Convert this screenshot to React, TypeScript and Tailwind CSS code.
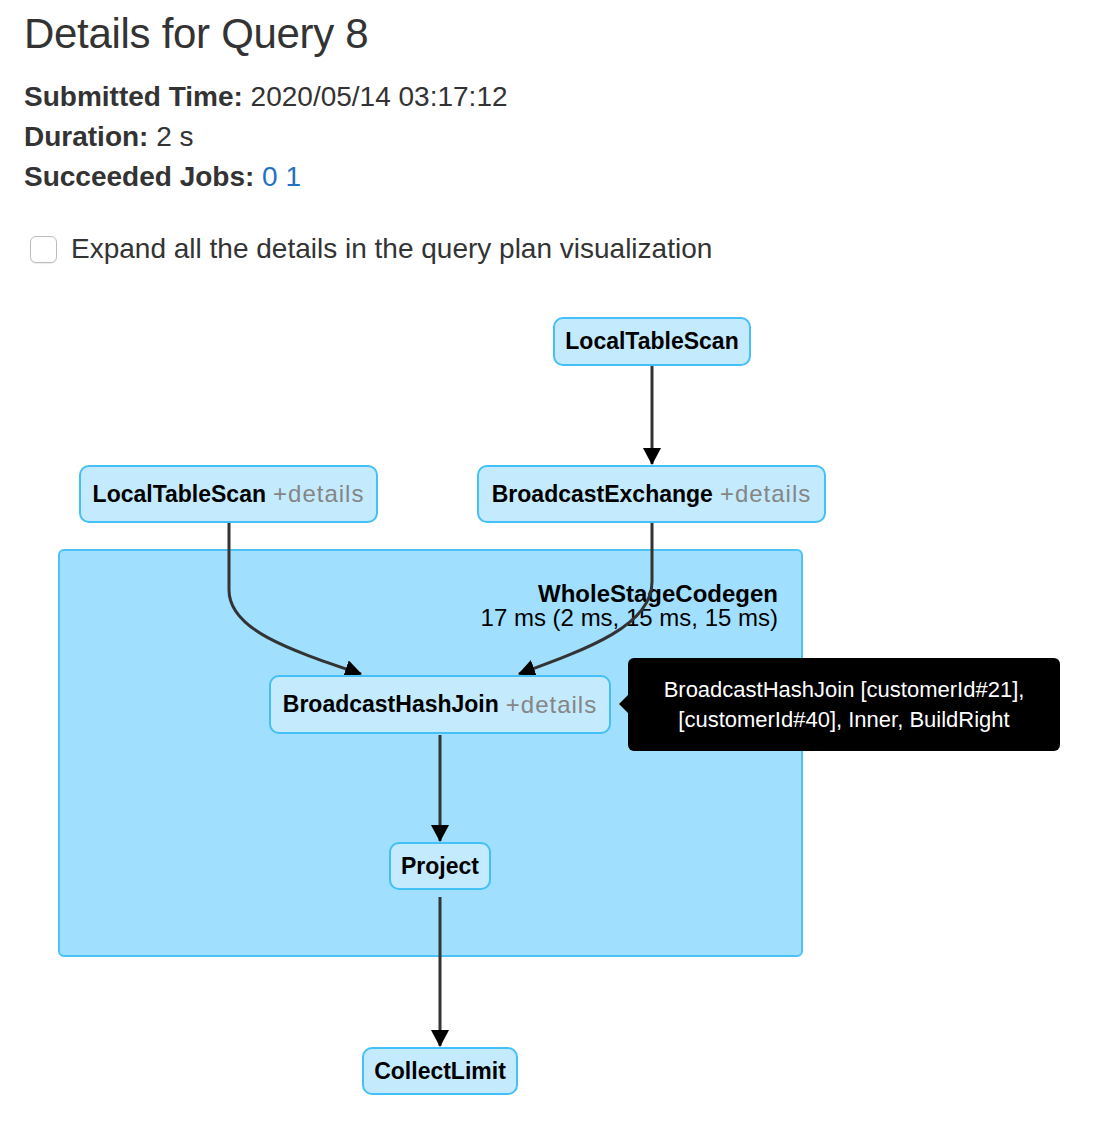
const font = { fontFamily: '"Liberation Sans", Arial, Helvetica, sans-serif' };

type NodeProps = {
  name: string;
  details?: boolean;
  className: string;
};

function PlanNode({ name, details, className }: NodeProps) {
  return (
    <div
      className={`absolute flex items-center justify-center rounded-[10px] border-2 border-[#42c0f7] bg-[#c4eafe] text-[23px] leading-none whitespace-nowrap ${className}`}
    >
      <span className="font-bold text-black">{name}</span>
      {details && <span className="ml-[7px] text-[24px] tracking-[1px] text-[#858585]">+details</span>}
    </div>
  );
}

function Edges() {
  return (
    <svg className="absolute left-0 top-0" width="1104" height="826">
      <defs>
        <marker
          id="arrow"
          markerUnits="userSpaceOnUse"
          markerWidth="18"
          markerHeight="18"
          refX="16"
          refY="9"
          orient="auto"
        >
          <path d="M0 0 L17 9 L0 18 z" fill="#000" />
        </marker>
      </defs>
      <g stroke="#333" strokeWidth="3" fill="none">
        <path d="M652 65 V164" markerEnd="url(#arrow)" />
        <path d="M229 222 V290 C229 330 290 350 361 374" markerEnd="url(#arrow)" />
        <path d="M652 222 V282 C652 325 590 348 519 374" markerEnd="url(#arrow)" />
        <path d="M440 435 V541" markerEnd="url(#arrow)" />
        <path d="M440 597 V746" markerEnd="url(#arrow)" />
      </g>
    </svg>
  );
}

export default function App() {
  return (
    <div className="min-h-[1126px] w-[1104px] bg-white text-[#333]" style={font}>
      <div className="px-[24px] pt-[10px]">
        <h1 className="text-[42px] leading-[48px] font-light tracking-[-0.3px]">Details for Query 8</h1>
        <ul className="mt-[19px] text-[28px] leading-[40px]">
          <li>
            <strong>Submitted Time:</strong> 2020/05/14 03:17:12
          </li>
          <li>
            <strong>Duration:</strong> 2 s
          </li>
          <li>
            <strong>Succeeded Jobs:</strong>{" "}
            <a href="#" className="text-[#1f74c0]">0</a>{" "}
            <a href="#" className="text-[#1f74c0]">1</a>
          </li>
        </ul>
        <label className="mt-[32px] flex items-center text-[28px] leading-[40px]">
          <span className="ml-[6px] mr-[14px] inline-block h-[27px] w-[27px] rounded-[6px] border border-[#bdbdbd] bg-white shadow-[0_1px_1px_rgba(0,0,0,0.08)]" />
          Expand all the details in the query plan visualization
        </label>
      </div>

      <div className="relative mt-[31px] h-[826px] w-[1104px]">
        {/* WholeStageCodegen cluster */}
        <div className="absolute left-[58px] top-[249px] h-[408px] w-[745px] rounded-[6px] border-2 border-[#4dc2f8] bg-[#a0dffe]">
          <div className="absolute right-[23px] top-[31px] text-right text-[24px] leading-[24px] text-black">
            <div className="font-bold">WholeStageCodegen</div>
            <div>17 ms (2 ms, 15 ms, 15 ms)</div>
          </div>
        </div>

        <Edges />

        <PlanNode name="LocalTableScan" className="left-[553px] top-[17px] h-[49px] w-[198px]" />
        <PlanNode name="LocalTableScan" details className="left-[79px] top-[165px] h-[58px] w-[299px]" />
        <PlanNode name="BroadcastExchange" details className="left-[477px] top-[165px] h-[58px] w-[349px]" />
        <PlanNode name="BroadcastHashJoin" details className="left-[269px] top-[375px] h-[59px] w-[342px]" />
        <PlanNode name="Project" className="left-[389px] top-[542px] h-[48px] w-[102px]" />
        <PlanNode name="CollectLimit" className="left-[362px] top-[747px] h-[48px] w-[156px]" />

        {/* tooltip */}
        <div className="absolute left-[628px] top-[358px] flex h-[93px] w-[432px] flex-col items-center justify-center rounded-[6px] bg-black text-center text-[22px] leading-[30px] text-white">
          <span className="absolute left-[-9px] top-[37px] h-0 w-0 border-y-[9px] border-r-[9px] border-y-transparent border-r-black" />
          <div>BroadcastHashJoin [customerId#21],</div>
          <div>[customerId#40], Inner, BuildRight</div>
        </div>
      </div>
    </div>
  );
}
